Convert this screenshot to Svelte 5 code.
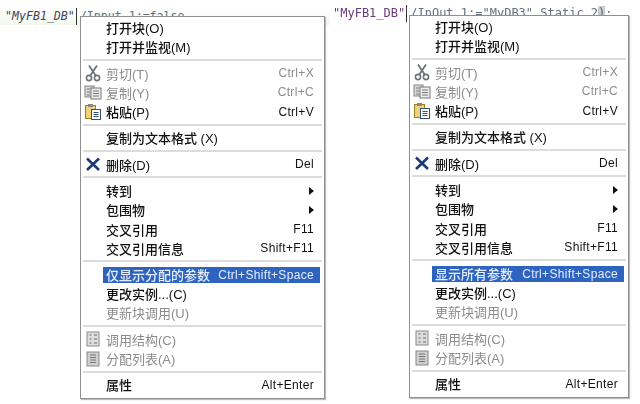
<script>
  const menu = (active) => [
    [{ t: "打开块(O)" }, { t: "打开并监视(M)" }],
    [
      { t: "剪切(T)", key: "Ctrl+X", off: true, icon: "cut" },
      { t: "复制(Y)", key: "Ctrl+C", off: true, icon: "copy" },
      { t: "粘贴(P)", key: "Ctrl+V", icon: "paste" }
    ],
    [{ t: "复制为文本格式 (X)" }],
    [{ t: "删除(D)", key: "Del", icon: "del" }],
    [
      { t: "转到", arrow: true },
      { t: "包围物", arrow: true },
      { t: "交叉引用", key: "F11" },
      { t: "交叉引用信息", key: "Shift+F11" }
    ],
    [
      { t: active, key: "Ctrl+Shift+Space", on: true },
      { t: "更改实例...(C)" },
      { t: "更新块调用(U)", off: true }
    ],
    [
      { t: "调用结构(C)", off: true, icon: "tree" },
      { t: "分配列表(A)", off: true, icon: "list" }
    ],
    [{ t: "属性", key: "Alt+Enter" }]
  ];

  const panes = [
    { cls: "left", active: "仅显示分配的参数" },
    { cls: "right", active: "显示所有参数" }
  ];
</script>

{#snippet icon(name)}
  {#if name === "cut"}
    <svg width="18" height="18" viewBox="0 0 18 18" fill="none" stroke="#6f7478">
      <path d="M5 1.500 L12 12 M13 1.500 L6 12" stroke-width="1.800" />
      <circle cx="5" cy="14" r="2.600" stroke-width="1.600" />
      <circle cx="13" cy="14" r="2.600" stroke-width="1.600" />
    </svg>
  {:else if name === "copy"}
    <svg width="18" height="18" viewBox="0 0 18 18" fill="none">
      <rect x="1" y="3" width="9" height="11" fill="#d8d8d8" stroke="#858585" />
      <rect x="7" y="5" width="10" height="11" fill="#ececec" stroke="#777" />
      <path d="M3 6h3M3 9h3M3 12h3M9 8h6M9 10.500h6M9 13h6" stroke="#777" />
    </svg>
  {:else if name === "paste"}
    <svg width="18" height="18" viewBox="0 0 18 18" fill="none">
      <rect x="1.500" y="2.500" width="10" height="13" fill="#f0d27a" stroke="#a07c28" />
      <rect x="4" y="1" width="5" height="3" fill="#888" />
      <rect x="7.500" y="6.500" width="9" height="10" fill="#fff" stroke="#34507c" />
      <path d="M9.500 9.500h5M9.500 11.500h5M9.500 13.500h5" stroke="#34507c" />
    </svg>
  {:else if name === "del"}
    <svg width="18" height="18" viewBox="0 0 18 18" fill="none">
      <path d="M3 3.500 L15 15 M15 3.500 L3 15" stroke="#1d3a78" stroke-width="2.600" />
    </svg>
  {:else if name === "tree"}
    <svg width="18" height="18" viewBox="0 0 18 18" fill="none">
      <rect x="3" y="2" width="12" height="14" fill="#dedede" stroke="#8a8a8a" />
      <path d="M5.500 5h2M5.500 9h2M5.500 13h2M10 5h3M10 9h3M10 13h3" stroke="#666" stroke-width="1.200" />
    </svg>
  {:else if name === "list"}
    <svg width="18" height="18" viewBox="0 0 18 18" fill="none">
      <rect x="3" y="2" width="12" height="14" fill="#cfcfcf" stroke="#8a8a8a" />
      <path d="M6 5h6M6 7.500h6M6 10h6M6 12.500h6" stroke="#777" />
    </svg>
  {/if}
{/snippet}

<div class="page">
  {#each panes as pane}
    <section class="pane {pane.cls}">
      {#if pane.cls === "left"}
        <div class="code"><i class="db">"MyFB1_DB"</i><span class="caret"></span><span class="rest">/Input_1:=false</span></div>
      {:else}
        <div class="code"><span class="db">"MyFB1_DB"</span><span class="caret"></span><span class="rest">/InOut_1:="MyDB3".Static_2<span class="paren">)</span>;</span></div>
      {/if}

      <div class="menu">
        {#each menu(pane.active) as group, g}
          {#if g > 0}<div class="sep"></div>{/if}
          {#each group as item}
            <div class="row" class:off={item.off}>
              <span class="ico">{#if item.icon}{@render icon(item.icon)}{/if}</span>
              <div class="body" class:on={item.on}>
                <span class="label">{item.t}</span>
                {#if item.key}
                  <span class="key">{item.key}</span>
                {:else if item.arrow}
                  <span class="arrow"></span>
                {/if}
              </div>
            </div>
          {/each}
        {/each}
      </div>
    </section>
  {/each}
</div>

<style>
  :global(body) {
    margin: 0;
    background: #fff;
  }

  .page {
    display: flex;
    width: 640px;
    height: 404px;
    overflow: hidden;
    font-family: "Liberation Sans", "Noto Sans CJK SC", sans-serif;
    filter: blur(0.35px);
  }

  .pane {
    position: relative;
    flex: none;
    height: 404px;
  }

  .pane.left {
    width: 330px;
  }

  .pane.right {
    width: 310px;
  }

  .code {
    display: flex;
    align-items: center;
    height: 18px;
    margin-top: 7px;
    padding-left: 5px;
    font-family: "DejaVu Sans Mono", monospace;
    font-size: 11.600px;
    white-space: nowrap;
    background: linear-gradient(#fff, #f2f8ee);
  }

  .right .code {
    margin-top: 4px;
    padding-left: 3px;
    font-size: 12px;
    background: none;
  }

  .db {
    color: #6a3a78;
  }

  .left .db {
    color: #445;
  }

  .caret {
    width: 1px;
    height: 17px;
    margin: 0 3px 0 1px;
    background: #333;
  }

  .rest {
    color: #607080;
  }

  .paren {
    background: #ccc;
  }

  .menu {
    position: absolute;
    top: 16px;
    left: 80px;
    width: 243px;
    padding: 1px 0 3px;
    background: #fff;
    border: 1px solid #8f8f8f;
    box-shadow: 1px 1px 1px #bbb;
  }

  .right .menu {
    left: 79px;
    top: 15px;
    width: 218px;
  }

  .row {
    display: flex;
    align-items: center;
    height: 19.200px;
    font-size: 13px;
    font-weight: 500;
    color: #111;
  }

  .row.off {
    font-weight: 400;
    color: #8c8c8c;
  }

  .ico {
    display: flex;
    flex: none;
    justify-content: center;
    width: 22px;
    box-sizing: border-box;
    padding-left: 1px;
  }

  .body {
    display: flex;
    flex: 1;
    align-items: center;
    justify-content: space-between;
    height: 16px;
    margin-right: 4px;
    padding: 0 6px 0 3px;
    white-space: nowrap;
  }

  .body.on {
    color: #e4eefc;
    background: #2f63c0;
  }

  .key {
    font-size: 12px;
    font-weight: 400;
    letter-spacing: 0.32px;
  }

  .arrow {
    width: 0;
    height: 0;
    border-top: 4.500px solid transparent;
    border-bottom: 4.500px solid transparent;
    border-left: 5px solid #111;
  }

  .sep {
    height: 2px;
    margin: 2.600px 2px;
    background: #dcdcdc;
  }
</style>
